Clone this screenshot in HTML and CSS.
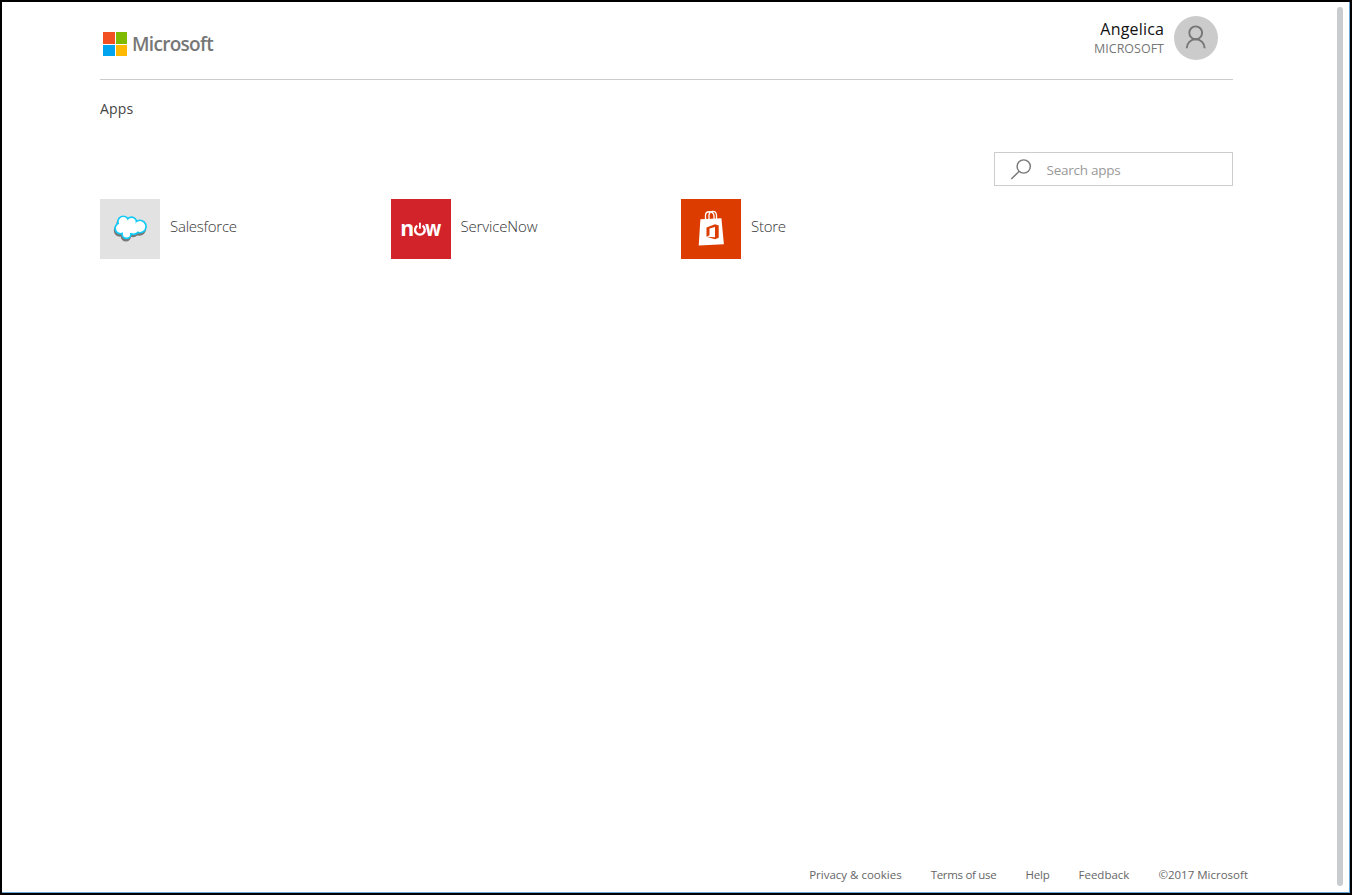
FILE: index.html
```
<!DOCTYPE html>
<html lang="en">
<head>
<meta charset="utf-8">
<title>Apps</title>
<link rel="stylesheet" href="styles.css">
</head>
<body>
<div class="window">
  <div class="page">
    <header class="header">
      <div class="brand">
        <div class="brand-mark"><i class="red"></i><i class="green"></i><i class="blue"></i><i class="yellow"></i></div>
        <span class="brand-name">Microsoft</span>
      </div>
      <div class="account">
        <div class="account-text">
          <span class="account-name">Angelica</span>
          <span class="account-org">MICROSOFT</span>
        </div>
        <svg class="avatar" viewBox="0 0 44 44">
          <circle cx="22" cy="22" r="22" fill="#cbcbcb"/>
          <g fill="none" stroke="#767676" stroke-width="1.9"><circle cx="21.7" cy="16.8" r="6.4"/><path d="M12.7 32.3c0-5.2 4-9.1 9-9.1s9 3.900 9 9.100"/></g>
        </svg>
      </div>
    </header>
    <main class="main">
      <h1 class="title">Apps</h1>
      <label class="search">
        <svg class="search-icon" viewBox="0 0 22 22" fill="none" stroke="#777" stroke-width="1.4"><circle cx="13.700" cy="8.500" r="6.600"/><path d="M9.200 13.200 1.300 21.100"/></svg>
        <input class="search-input" type="text" placeholder="Search apps">
      </label>
      <div class="apps">
        <div class="app">
          <svg class="tile" viewBox="0 0 60 60">
            <defs>
              <g id="cloud"><circle cx="23.300" cy="22.700" r="4.600"/><circle cx="31.500" cy="23.200" r="4.200"/><circle cx="39.800" cy="27.500" r="5.400"/><circle cx="20.600" cy="29.300" r="4.600"/><circle cx="26.500" cy="35" r="3.600"/><circle cx="33.500" cy="29.500" r="5"/><circle cx="27" cy="29" r="6"/></g>
            </defs>
            <rect width="60" height="60" fill="#e2e2e2"/>
            <use href="#cloud" x="-.6" y="2.200" fill="#777" stroke="#777" stroke-width="3.200"/>
            <use href="#cloud" fill="#12cbf7" stroke="#12cbf7" stroke-width="3.400"/>
            <use href="#cloud" fill="#fff"/>
          </svg>
          <span class="app-name salesforce">Salesforce</span>
        </div>
        <div class="app">
          <svg class="tile" viewBox="0 0 60 60">
            <rect width="60" height="60" fill="#d2232a"/>
            <text class="tile-text" x="9.300" y="36.500" textLength="14" lengthAdjust="spacingAndGlyphs">n</text>
            <text class="tile-text" x="34.300" y="36.500" textLength="16" lengthAdjust="spacingAndGlyphs">w</text>
            <path fill="none" stroke="#fff" stroke-width="2.300" d="M26.300 26.700a4.850 4.850 0 1 0 5.200 0"/>
            <path fill="none" stroke="#fff" stroke-width="1.900" d="M28.900 23.700v6"/>
          </svg>
          <span class="app-name servicenow">ServiceNow</span>
        </div>
        <div class="app">
          <svg class="tile" viewBox="0 0 60 60">
            <rect width="60" height="60" fill="#dc3c00"/>
            <path fill="none" stroke="#fff" stroke-width="1.300" d="M24.500 21v-4.500c0-5 7.500-5 8.500 0V20M28 20v-4c1-5 7-4.500 7.500 0v4"/>
            <path fill="#fff" d="M19.400 20.300 40.400 19.300 42.900 45.300 17.700 46.500z"/>
            <path fill="#dc3c00" fill-rule="evenodd" d="m25.500 28.500 8.500-3.300 3.700 1.300v12.300L34 40.200l-8.500-2.500 8.500.6V28l-5.500 1.600v6.700l-3 1.400z"/>
          </svg>
          <span class="app-name store">Store</span>
        </div>
      </div>
    </main>
    <footer class="footer">
      <a class="privacy">Privacy &amp; cookies</a>
      <a class="terms">Terms of use</a>
      <a class="help">Help</a>
      <a class="feedback">Feedback</a>
      <span class="copyright">©2017 Microsoft</span>
    </footer>
  </div>
  <div class="scrollbar"></div>
</div>
</body>
</html>
```
FILE: styles.css
```
* { box-sizing: border-box; }
body { margin: 0; background: #000; font-family: "Open Sans", "Noto Sans", sans-serif; overflow: hidden; }
.window {
  height: 895px;
  display: flex;
  border: 2px solid #000;
  background: #fff;
  box-shadow: inset -1px -1px #69a7d8;
}
.page { width: 1335px; flex: none; padding: 0 104px 0 98px; display: flex; flex-direction: column; }
.header { height: 78px; display: flex; justify-content: space-between; border-bottom: 1px solid #ccc; }
.brand { display: flex; align-items: center; height: 24px; margin: 30px 0 0 3px; gap: 5px; }
.brand-mark { width: 24px; height: 24px; display: grid; grid-template-columns: 1fr 1fr; gap: 1px; }
.red { background: #f25022; }
.green { background: #7fba00; }
.blue { background: #00a4ef; }
.yellow { background: #ffb900; }
.brand-name { font-size: 19px; font-weight: 600; color: #777; letter-spacing: -.7px; line-height: 24px; }
.account { display: flex; gap: 10px; margin: 14px 15px 0 0; height: 44px; }
.account-text { display: flex; flex-direction: column; align-items: flex-end; padding-top: 3px; }
.account-name { font-size: 16px; line-height: 21px; color: #111; letter-spacing: .2px; margin-right: -.2px; }
.account-org { font-size: 12.500px; line-height: 17px; color: #777; }
.avatar { width: 44px; height: 44px; }
.main { flex: 1; display: flex; flex-direction: column; }
.title { margin: 18px 0 0; font-size: 14px; font-weight: 400; line-height: 22px; color: #444; letter-spacing: .2px; }
.search { align-self: flex-end; width: 239px; height: 34px; margin-top: 32px; border: 1px solid #ccc; display: flex; align-items: center; padding-left: 15px; gap: 14.500px; }
.search-icon { width: 22px; height: 22px; flex: none; }
.search-input { width: 170px; border: 0; padding: 2px 0 0; outline: 0; font: 13.500px "Open Sans", sans-serif; letter-spacing: -.25px; background: none; }
.search-input::placeholder { color: #999; opacity: 1; }
.apps { display: grid; grid-template-columns: 290.500px 290.500px 1fr; margin-top: 13px; }
.app { display: flex; gap: 10px; }
.tile { width: 60px; height: 60px; flex: none; }
.tile-text { font: 700 22px "Open Sans", sans-serif; fill: #fff; }
.app-name { font-size: 15px; line-height: 22px; padding-top: 16px; color: #333; font-weight: 300; letter-spacing: -.15px; }
.salesforce, .store { letter-spacing: -.25px; }
.footer { height: 36px; display: flex; align-items: flex-start; justify-content: flex-end; gap: 29px; margin-right: -15px; padding-top: 9px; font-size: 11.500px; line-height: 18px; color: #666; white-space: nowrap; }
.terms { letter-spacing: -.3px; }
.help { letter-spacing: -.2px; }
.scrollbar { width: 6px; height: 879px; margin-top: 5px; border-radius: 3px; background: #c8cccf; }
```
